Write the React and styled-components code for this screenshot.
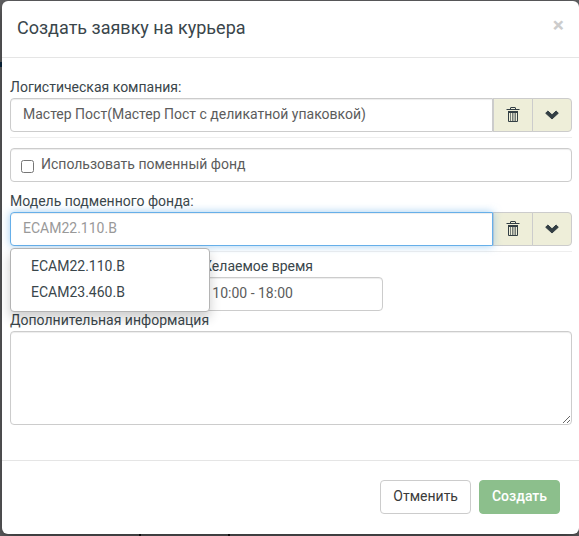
import React, { useState } from 'react';
import styled, { createGlobalStyle } from 'styled-components';

const GlobalStyle = createGlobalStyle`
    * {
        box-sizing:border-box;
    }
    body {
        margin:0;
        background:#59595b;
        color:#3a464b;
        font-family:Roboto, "Liberation Sans", sans-serif;
        font-size:14px;
        line-height:20px;
    }
    button, input, textarea {
        font:inherit;
    }
`;
const Backdrop = styled.div`
    min-height:100vh;
    padding:1px 0 2px 2px;
    background:
        linear-gradient(#0b2a44, #0b2a44) 0 62px / 2px 5px no-repeat,
        linear-gradient(#111, #111) 139px 100% / 2px 2px no-repeat,
        linear-gradient(#111, #111) 228px 100% / 2px 2px no-repeat,
        #626264;
`;
const Modal = styled.form`
    background:#fff;
    border-radius:6px;
    box-shadow:0 5px 15px rgba(0,0,0,.5);
`;
const Header = styled.header`
    display:flex;
    justify-content:space-between;
    align-items:flex-start;
    padding:14px 15px 16px;
    border-bottom:1px solid #e5e5e5;
`;
const Title = styled.h4`
    margin:0;
    font-size:18px;
    font-weight:400;
    line-height:26px;
`;
const CloseButton = styled.button`
    padding:0;
    border:0;
    background:none;
    color:#ccc;
    font-size:21px;
    font-weight:700;
    line-height:20px;
    cursor:pointer;
`;
const Body = styled.div`
    padding:20px 7px 35px 8px;
`;
const Field = styled.div`
    position:relative;
    display:flex;
    flex-direction:column;
`;
const Label = styled.label`
    height:20px;
    line-height:18px;
`;
const InputGroup = styled.div`
    display:flex;
`;
const Input = styled.input`
    width:100%;
    min-width:0;
    height:34px;
    padding:5px 12px 7px;
    border:1px solid #ccc;
    border-radius:${props => props.$grouped ? '4px 0 0 4px' : '4px'};
    box-shadow:inset 0 1px 1px rgba(0,0,0,.075);
    background:#fff;
    color:#5c5c5c;
    outline:0;
    &::placeholder {
        color:#999;
    }
    ${props => props.$active && `
        position:relative;
        z-index:1;
        border-color:#66afe9;
        box-shadow:inset 0 1px 1px rgba(0,0,0,.075), 0 0 8px rgba(102,175,233,.6);
    `}
`;
const Addon = styled.button`
    display:flex;
    flex-shrink:0;
    align-items:center;
    justify-content:center;
    width:40px;
    height:34px;
    margin-left:-1px;
    padding:0;
    border:1px solid #ccc;
    background:#eeeed9;
    color:#333f44;
    cursor:pointer;
    &:first-of-type {
        margin-left:0;
    }
    &:last-child {
        border-radius:0 4px 4px 0;
    }
`;
const Divider = styled.hr`
    width:100%;
    margin:5px 0 10px;
    border:0;
    border-top:1px solid #eee;
`;
const CheckRow = styled.label`
    display:flex;
    align-items:center;
    height:34px;
    margin-bottom:10px;
    padding:0 10px 2px;
    border:1px solid #ccc;
    border-radius:4px;
    box-shadow:inset 0 1px 1px rgba(0,0,0,.075);
    color:#5c5c5c;
`;
const Checkbox = styled.input`
    width:13px;
    height:13px;
    margin:4px 7px 0 0;
`;
const Menu = styled.ul`
    position:absolute;
    top:100%;
    left:0;
    z-index:2;
    width:200px;
    margin:2px 0 0;
    padding:4px 0 6px;
    border:1px solid #b4b4b4;
    border-radius:4px;
    background:#fff;
    box-shadow:0 6px 12px rgba(0,0,0,.2);
    list-style:none;
`;
const MenuItem = styled.li`
    padding:3px 20px;
    cursor:pointer;
`;
const Schedule = styled.div`
    display:grid;
    grid-template-columns:1fr 1fr 1fr;
    column-gap:6px;
    margin-top:-5px;
`;
const TextArea = styled.textarea`
    display:block;
    height:94px;
    padding:6px 12px;
    border:1px solid #ccc;
    border-radius:4px;
    box-shadow:inset 0 1px 1px rgba(0,0,0,.075);
    color:#5c5c5c;
    outline:0;
    resize:vertical;
`;
const Footer = styled.footer`
    display:flex;
    justify-content:flex-end;
    gap:8px;
    padding:19px 19px 20px;
    border-top:1px solid #e5e5e5;
`;
const Button = styled.button`
    height:34px;
    padding:0 12px 2px;
    border:1px solid ${props => props.$primary ? '#8cbf8c' : '#ccc'};
    border-radius:4px;
    background:${props => props.$primary ? '#8cbf8c' : '#fff'};
    color:${props => props.$primary ? '#fff' : '#3a3a3a'};
    font-weight:${props => props.$primary ? 500 : 400};
    cursor:pointer;
`;

const TrashIcon = () => (
    <svg width="14" height="16" viewBox="0 0 14 16" fill="none" stroke="currentColor" aria-hidden="true">
        <path d="M4.5 2.5V1Q4.5.5 5 .5h4q.5 0 .5.5v1.5" />
        <path d="M.5 2.5h13" />
        <path d="M2 5h10" strokeWidth="2" />
        <path d="M2.5 5v9.5h9V5" />
        <path d="M4.5 6v8M6.5 6v8M8 6v8M9.5 6v8" strokeOpacity=".65" />
    </svg>
);

const ChevronIcon = () => (
    <svg width="14" height="14" viewBox="0 0 14 14" fill="currentColor" stroke="currentColor" strokeLinejoin="round" aria-hidden="true">
        <path d="M7 11L.7 5.2 2.9 3 7 6.8 11.1 3l2.2 2.2z" />
    </svg>
);

const Addons = ({onClear, onToggle}) => (
    <>
        <Addon type="button" aria-label="Очистить" onClick={onClear}><TrashIcon /></Addon>
        <Addon type="button" aria-label="Показать список" onClick={onToggle}><ChevronIcon /></Addon>
    </>
);

const models = ['ECAM22.110.B', 'ECAM23.460.B'];

const App = () => {
    const [company, setCompany] = useState('Мастер Пост(Мастер Пост с деликатной упаковкой)');
    const [model, setModel] = useState('');
    const [open, setOpen] = useState(true);

    const pick = (item) => {
        setModel(item);
        setOpen(false);
    };

    return (
        <Backdrop>
            <GlobalStyle />
            <Modal onSubmit={e => e.preventDefault()}>
                <Header>
                    <Title>Создать заявку на курьера</Title>
                    <CloseButton type="button" aria-label="Закрыть">×</CloseButton>
                </Header>
                <Body>
                    <Field>
                        <Label htmlFor="company">Логистическая компания:</Label>
                        <InputGroup>
                            <Input id="company" $grouped value={company} onChange={e => setCompany(e.target.value)} />
                            <Addons onClear={() => setCompany('')} />
                        </InputGroup>
                    </Field>
                    <Divider />
                    <CheckRow>
                        <Checkbox type="checkbox" />
                        Использовать поменный фонд
                    </CheckRow>
                    <Field>
                        <Label htmlFor="model">Модель подменного фонда:</Label>
                        <InputGroup>
                            <Input
                                id="model"
                                $grouped
                                $active={open}
                                placeholder="ECAM22.110.B"
                                value={model}
                                onChange={e => setModel(e.target.value)}
                            />
                            <Addons onClear={() => setModel('')} onToggle={() => setOpen(!open)} />
                        </InputGroup>
                        {
                            open &&
                            <Menu>
                                {models.map(item => (
                                    <MenuItem key={item} onClick={() => pick(item)}>{item}</MenuItem>
                                ))}
                            </Menu>
                        }
                    </Field>
                    <Divider />
                    <Schedule>
                        <Field>
                            <Label htmlFor="date">Желаемая дата</Label>
                            <Input id="date" />
                        </Field>
                        <Field>
                            <Label htmlFor="time">Желаемое время</Label>
                            <Input id="time" defaultValue="10:00 - 18:00" />
                        </Field>
                    </Schedule>
                    <Field>
                        <Label htmlFor="info">Дополнительная информация</Label>
                        <TextArea id="info" />
                    </Field>
                </Body>
                <Footer>
                    <Button type="button">Отменить</Button>
                    <Button type="submit" $primary>Создать</Button>
                </Footer>
            </Modal>
        </Backdrop>
    );
};

export default App;
